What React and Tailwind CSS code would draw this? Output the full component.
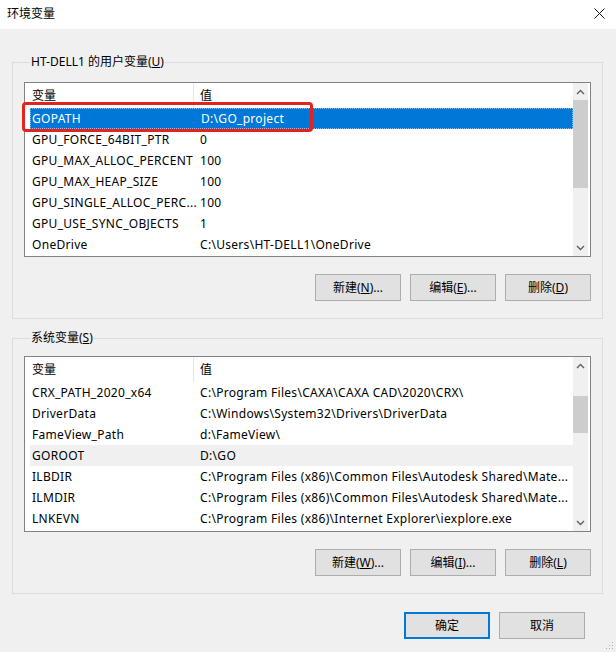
import React from 'react';

const font = { fontFamily: '"Noto Sans", "Noto Sans CJK SC", sans-serif' };

const userVars = [
  ['GOPATH', 'D:\\GO_project'],
  ['GPU_FORCE_64BIT_PTR', '0'],
  ['GPU_MAX_ALLOC_PERCENT', '100'],
  ['GPU_MAX_HEAP_SIZE', '100'],
  ['GPU_SINGLE_ALLOC_PERC...', '100'],
  ['GPU_USE_SYNC_OBJECTS', '1'],
  ['OneDrive', 'C:\\Users\\HT-DELL1\\OneDrive'],
];

const sysVars = [
  ['CRX_PATH_2020_x64', 'C:\\Program Files\\CAXA\\CAXA CAD\\2020\\CRX\\'],
  ['DriverData', 'C:\\Windows\\System32\\Drivers\\DriverData'],
  ['FameView_Path', 'd:\\FameView\\'],
  ['GOROOT', 'D:\\GO'],
  ['ILBDIR', 'C:\\Program Files (x86)\\Common Files\\Autodesk Shared\\Mate...'],
  ['ILMDIR', 'C:\\Program Files (x86)\\Common Files\\Autodesk Shared\\Mate...'],
  ['LNKEVN', 'C:\\Program Files (x86)\\Internet Explorer\\iexplore.exe'],
];

function Chevron({ down }) {
  return (
    <svg width="9" height="6" viewBox="0 0 9 6">
      <polyline
        points={down ? '1,1 4.5,4.5 8,1' : '1,5 4.5,1.5 8,5'}
        fill="none"
        stroke="#606060"
        strokeWidth="1.4"
      />
    </svg>
  );
}

function ScrollBar({ thumbTop, thumbHeight }) {
  return (
    <div className="w-[15px] mr-[2px] flex flex-col bg-[#f0f0f0]">
      <div className="h-[17px] flex items-center justify-center">
        <Chevron />
      </div>
      <div className="flex-1 flex flex-col">
        <div className="bg-[#cdcdcd]" style={{ marginTop: thumbTop, height: thumbHeight }} />
      </div>
      <div className="h-[17px] flex items-center justify-center">
        <Chevron down />
      </div>
    </div>
  );
}

function VarList({ rows, height, headerHeight, selected, hovered, thumbTop, thumbHeight, marked }) {
  return (
    <div className="relative bg-white border border-[#828282] flex" style={{ height }}>
      <div className="flex-1 pl-[5px] flex flex-col">
        <div className="flex items-center text-[12px] text-black" style={{ height: headerHeight }}>
          <div className="w-[163px] pl-[2px]">变量</div>
          <div className="w-px h-full bg-[#e5e5e5]" />
          <div className="pl-[6px]">值</div>
        </div>
        {rows.map(([name, value], i) => (
          <div
            key={name}
            className={
              'h-[21px] flex items-center text-[12px] tracking-[0.3px] whitespace-nowrap overflow-hidden ' +
              (i === selected
                ? 'bg-[#0078d7] text-white border border-dotted border-[#8cc0ee]'
                : i === hovered
                ? 'bg-[#f0f0f0] text-black'
                : 'text-black')
            }
          >
            <div className={'w-[170px] shrink-0 overflow-hidden ' + (i === selected ? 'pl-[1px]' : 'pl-[2px]')}>{name}</div>
            <div className="overflow-hidden">{value}</div>
          </div>
        ))}
      </div>
      <ScrollBar thumbTop={thumbTop} thumbHeight={thumbHeight} />
      {marked && (
        <div className="absolute left-[-3px] top-[19px] w-[291px] h-[30px] border-[3px] border-[#e3231f] rounded-[4px]" />
      )}
    </div>
  );
}

function Btn({ children, primary }) {
  return (
    <button
      className={
        'w-[86px] h-[27px] bg-[#e1e1e1] text-[12px] text-black flex items-center justify-center ' +
        (primary ? 'border-2 border-[#0078d7]' : 'border border-[#adadad]')
      }
    >
      {children}
    </button>
  );
}

function Group({ title, children, className }) {
  return (
    <fieldset className={'ml-[12px] w-[591px] border border-[#dcdcdc] px-[11px] pb-[17px] ' + className}>
      <legend className="ml-[6px] px-[1px] text-[12px] leading-[16px] text-black">{title}</legend>
      {children}
    </fieldset>
  );
}

export default function App() {
  return (
    <div className="relative w-[616px] h-[652px] bg-[#f0f0f0] flex flex-col overflow-hidden" style={font}>
      {/* Title bar */}
      <div className="h-[29px] bg-white flex items-center justify-between pl-[7px] pr-[11px] shrink-0">
        <span className="text-[12px] text-black -mt-[2px]">环境变量</span>
        <svg width="11" height="11" viewBox="0 0 11 11" className="-mt-[3px]">
          <path d="M0.5 0.5 L10.5 10.5 M10.5 0.5 L0.5 10.5" stroke="#111" strokeWidth="1" />
        </svg>
      </div>

      {/* 用户变量 */}
      <Group title={<>HT-DELL1 的用户变量(<u>U</u>)</>} className="mt-[25px]">
        <div className="mt-[12px]">
          <VarList rows={userVars} height={175} headerHeight={25} selected={0} thumbTop={0} thumbHeight={88} marked />
        </div>
        <div className="mt-[17px] flex justify-end gap-[9px]">
          <Btn>新建(<u>N</u>)...</Btn>
          <Btn>编辑(<u>E</u>)...</Btn>
          <Btn>删除(<u>D</u>)</Btn>
        </div>
      </Group>

      {/* 系统变量 */}
      <Group title={<>系统变量(<u>S</u>)</>} className="mt-[11px]">
        <div className="mt-[10px]">
          <VarList rows={sysVars} height={176} headerHeight={25} hovered={3} thumbTop={22} thumbHeight={37} />
        </div>
        <div className="mt-[17px] flex justify-end gap-[9px]">
          <Btn>新建(<u>W</u>)...</Btn>
          <Btn>编辑(<u>I</u>)...</Btn>
          <Btn>删除(<u>L</u>)</Btn>
        </div>
      </Group>

      {/* OK / Cancel */}
      <div className="mt-[18px] flex justify-end gap-[9px] pr-[31px]">
        <Btn primary>确定</Btn>
        <Btn>取消</Btn>
      </div>

      {/* resize grip */}
      <svg width="8" height="8" viewBox="0 0 8 8" className="absolute right-[2px] bottom-[2px]">
        <rect x="6" y="0" width="1" height="1" fill="#b0b0b0" />
        <rect x="3" y="3" width="1" height="1" fill="#b0b0b0" />
        <rect x="6" y="3" width="1" height="1" fill="#b0b0b0" />
        <rect x="0" y="6" width="1" height="1" fill="#b0b0b0" />
        <rect x="3" y="6" width="1" height="1" fill="#b0b0b0" />
        <rect x="6" y="6" width="1" height="1" fill="#b0b0b0" />
      </svg>
    </div>
  );
}
